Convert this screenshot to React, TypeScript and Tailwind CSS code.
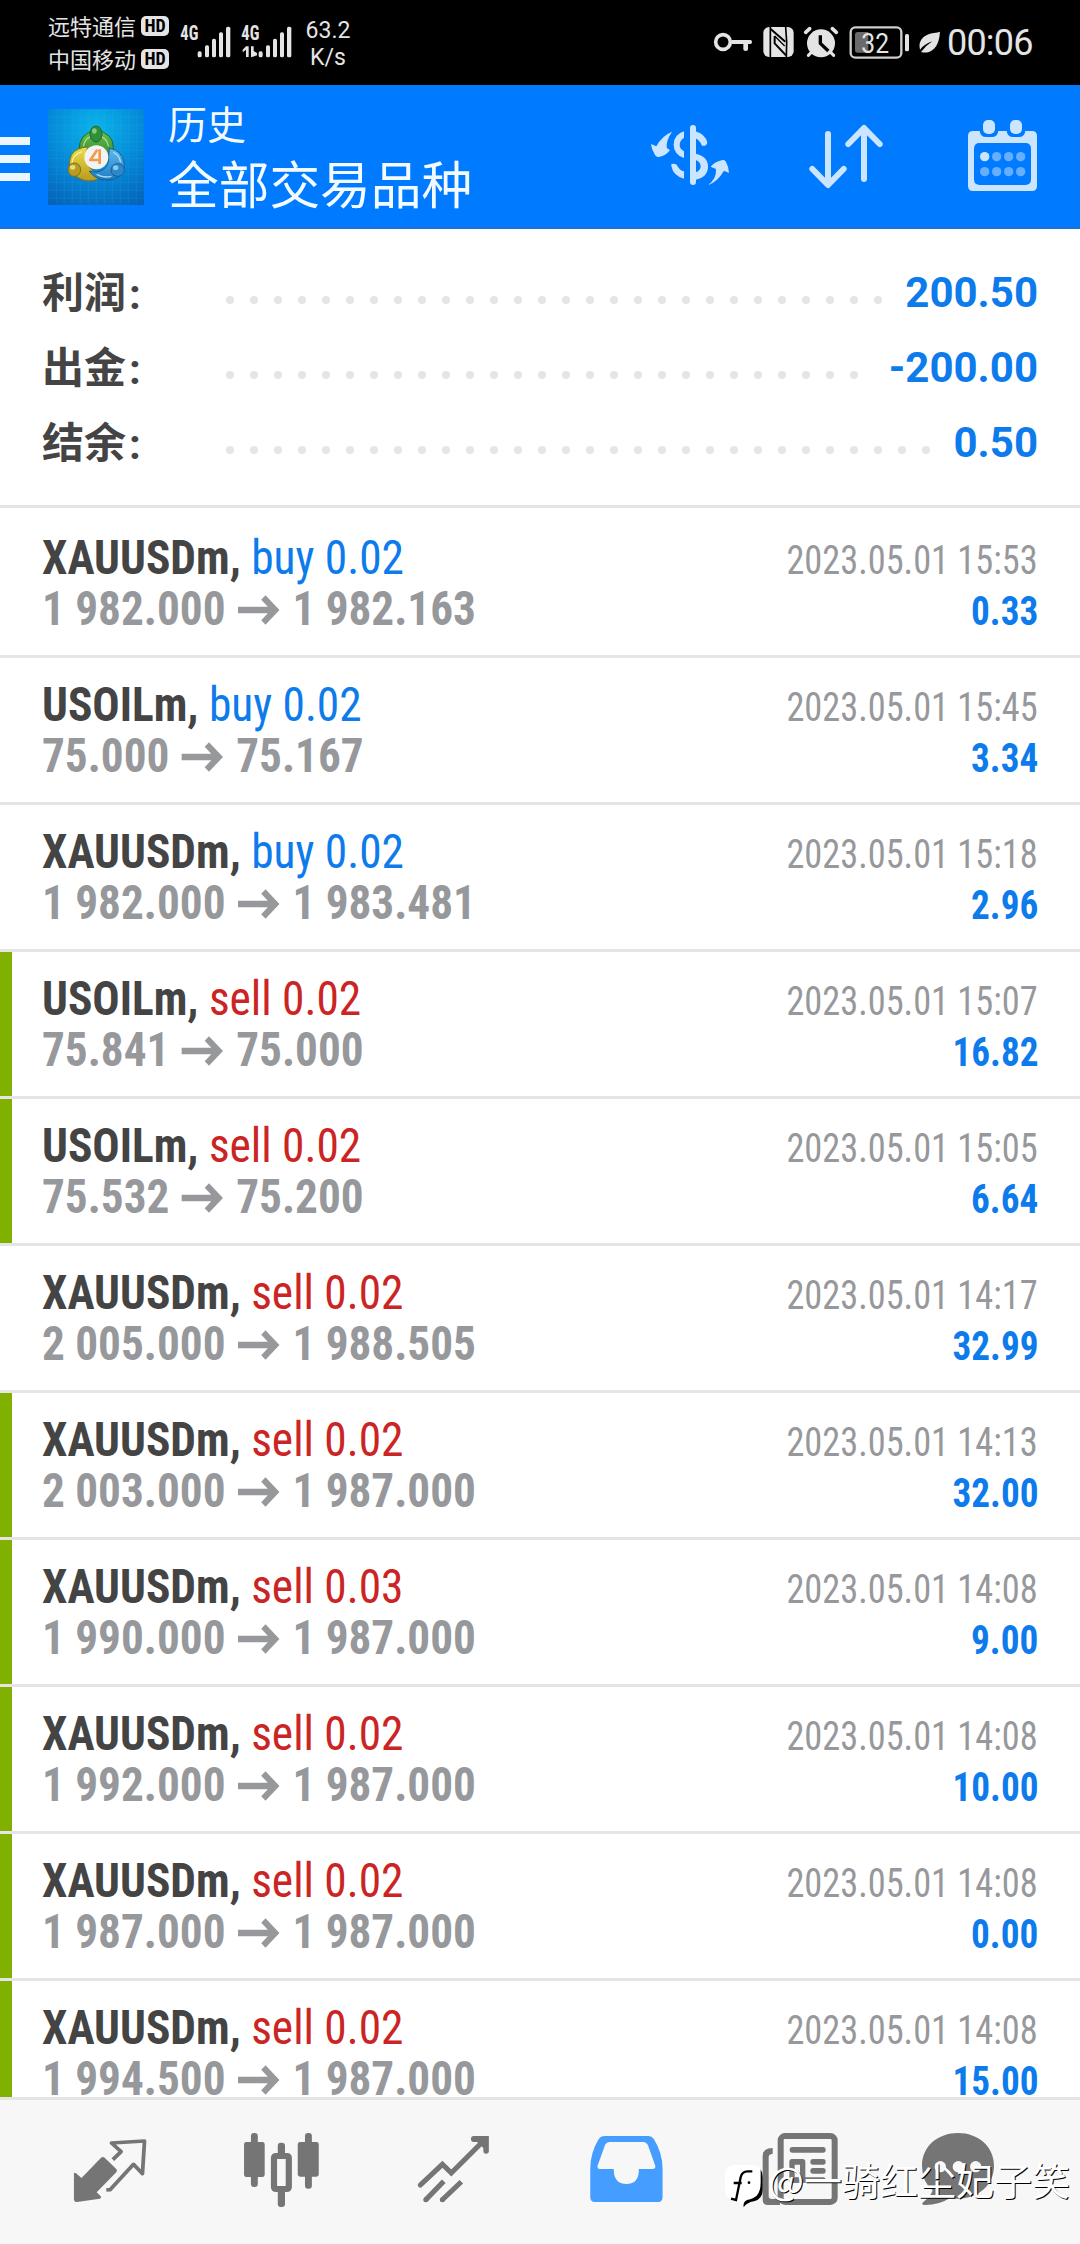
import type { ReactNode } from "react";

type Side = "buy" | "sell";

interface Deal {
  symbol: string;
  side: Side;
  volume: string;
  open: string;
  close: string;
  time: string;
  profit: string;
  // closed by take profit, drawn with a green mark on the left edge
  tp?: boolean;
}

const deals: Deal[] = [
  { symbol: "XAUUSDm", side: "buy", volume: "0.02", open: "1 982.000", close: "1 982.163", time: "2023.05.01 15:53", profit: "0.33" },
  { symbol: "USOILm", side: "buy", volume: "0.02", open: "75.000", close: "75.167", time: "2023.05.01 15:45", profit: "3.34" },
  { symbol: "XAUUSDm", side: "buy", volume: "0.02", open: "1 982.000", close: "1 983.481", time: "2023.05.01 15:18", profit: "2.96" },
  { symbol: "USOILm", side: "sell", volume: "0.02", open: "75.841", close: "75.000", time: "2023.05.01 15:07", profit: "16.82", tp: true },
  { symbol: "USOILm", side: "sell", volume: "0.02", open: "75.532", close: "75.200", time: "2023.05.01 15:05", profit: "6.64", tp: true },
  { symbol: "XAUUSDm", side: "sell", volume: "0.02", open: "2 005.000", close: "1 988.505", time: "2023.05.01 14:17", profit: "32.99" },
  { symbol: "XAUUSDm", side: "sell", volume: "0.02", open: "2 003.000", close: "1 987.000", time: "2023.05.01 14:13", profit: "32.00", tp: true },
  { symbol: "XAUUSDm", side: "sell", volume: "0.03", open: "1 990.000", close: "1 987.000", time: "2023.05.01 14:08", profit: "9.00", tp: true },
  { symbol: "XAUUSDm", side: "sell", volume: "0.02", open: "1 992.000", close: "1 987.000", time: "2023.05.01 14:08", profit: "10.00", tp: true },
  { symbol: "XAUUSDm", side: "sell", volume: "0.02", open: "1 987.000", close: "1 987.000", time: "2023.05.01 14:08", profit: "0.00", tp: true },
  { symbol: "XAUUSDm", side: "sell", volume: "0.02", open: "1 994.500", close: "1 987.000", time: "2023.05.01 14:08", profit: "15.00", tp: true },
];

const summary = [
  { label: "利润", value: "200.50", dots: 28 },
  { label: "出金", value: "-200.00", dots: 27 },
  { label: "结余", value: "0.50", dots: 30 },
];

function Carrier({ name }: { name: string }) {
  return (
    <div className="flex items-center h-[33px]">
      <span className="w-[93px] text-[22px] leading-[33px] whitespace-nowrap">{name}</span>
      <span className="flex items-center justify-center w-[28px] h-5 rounded-[5px] bg-[#e4e4e4] text-black text-[18px] leading-5 font-bold font-['Roboto_Condensed',Roboto,sans-serif] font-stretch-condensed">
        HD
      </span>
    </div>
  );
}

function Signal({ data }: { data?: boolean }) {
  return (
    <div className="flex w-[61px]">
      <svg className="w-[51px] h-[33px]" viewBox="450 75 153 99" fill="#e4e4e4">
        <text
          x="451"
          y="121"
          fontSize="58"
          fontWeight="700"
          textLength="54"
          lengthAdjust="spacingAndGlyphs"
          fontFamily="'Roboto Condensed', Roboto, sans-serif"
        >
          4G
        </text>
        {data && <path d="M465 139h8v32h-8v-22l-10 8v-8zM480 139h8v14l10 6v7l-18 6z" />}
        <rect x="503" y="154" width="12" height="18" rx="5" />
        <rect x="525" y="136" width="12" height="36" rx="5" />
        <rect x="546" y="116" width="12" height="56" rx="5" />
        <rect x="567" y="97" width="12" height="75" rx="5" />
        <rect x="588" y="80" width="13" height="92" rx="5" />
      </svg>
    </div>
  );
}

function StatusBar() {
  return (
    <div className="flex h-[85px] shrink-0 bg-black text-[#e4e4e4] font-['Noto_Sans_CJK_SC',sans-serif]">
      <div className="flex flex-col pl-12 pt-[9px] w-[180px] shrink-0">
        <Carrier name="远特通信" />
        <Carrier name="中国移动" />
      </div>
      <div className="flex pt-[25px]">
        <Signal />
        <Signal data />
      </div>
      <div className="pt-[17px] pl-0.5 w-[50px] text-center text-[23px] leading-[27px] font-[Roboto,sans-serif]">
        <div>63.2</div>
        <div>K/s</div>
      </div>
      <div className="flex grow justify-end pr-[45px] pt-[15px] font-[Roboto,sans-serif]">
        <svg className="w-[236px] h-[54px]" viewBox="210 45 708 162" fill="#e4e4e4">
          {/* vpn key */}
          <circle cx="249" cy="126" r="22" fill="none" stroke="#e4e4e4" strokeWidth="11" />
          <path d="M275 120h56q5 0 5 6t-5 6h-7v16q0 5-7 5t-7-5v-16h-35z" />
          {/* nfc */}
          <rect x="370" y="81" width="91" height="90" rx="17" />
          <path d="M391 81v90M437 81q5 44 2 90" fill="none" stroke="#000" strokeWidth="5" />
          <path d="M392 87l44 38M404 108v22l34 36" fill="none" stroke="#000" strokeWidth="6" />
          <path d="M404 108l30 30" stroke="#000" strokeWidth="4" />
          {/* alarm */}
          <circle cx="543" cy="130" r="42" />
          <path d="M497 97l12-11M589 97l-12-11" stroke="#e4e4e4" strokeWidth="11" strokeLinecap="round" />
          <path d="M514 157l-9 9M572 157l9 9" stroke="#e4e4e4" strokeWidth="9" strokeLinecap="round" />
          <path d="M541 106v24l24 23" fill="none" stroke="#000" strokeWidth="10" />
          {/* battery */}
          <rect x="632" y="82" width="152" height="91" rx="14" fill="none" stroke="#cfcfcf" strokeWidth="7" />
          <path d="M653 96h32v62h-32q-8 0-8-8v-46q0-8 8-8z" fill="#6a6a6a" />
          <rect x="795" y="102" width="12" height="52" rx="5" />
          <text x="664" y="158" fontSize="84" textLength="83" lengthAdjust="spacingAndGlyphs" fontFamily="Roboto, sans-serif">
            32
          </text>
          {/* power saving leaf */}
          <path d="M900 95q-2 36-18 51-16 15-36 11l-3-1q14-19 34-32-24 8-37 25-6-22 10-37 12-11 32-13 12-1 18-4z" />
        </svg>
        <span className="pl-px w-[89px] text-[36px] leading-[57px] tracking-[-0.8px] whitespace-nowrap">00:06</span>
      </div>
    </div>
  );
}

function AppLogo() {
  return (
    <svg className="w-24 h-24 mt-0.5" viewBox="54 326 288 288">
      <defs>
        <radialGradient id="bg" cx="0.5" cy="0.2" r="0.9">
          <stop offset="0" stopColor="#0ab4ea" />
          <stop offset="0.55" stopColor="#0588d8" />
          <stop offset="1" stopColor="#0564b8" />
        </radialGradient>
        <linearGradient id="green" x1="0" y1="0" x2="0" y2="1">
          <stop offset="0" stopColor="#6cc04f" />
          <stop offset="1" stopColor="#25802c" />
        </linearGradient>
        <linearGradient id="yellow" x1="0" y1="0" x2="0" y2="1">
          <stop offset="0" stopColor="#eadf4a" />
          <stop offset="1" stopColor="#b99b1c" />
        </linearGradient>
        <linearGradient id="blue" x1="0" y1="0" x2="0" y2="1">
          <stop offset="0" stopColor="#5fb9ec" />
          <stop offset="1" stopColor="#1f7cc4" />
        </linearGradient>
      </defs>
      <rect x="54" y="326" width="288" height="288" fill="url(#bg)" />
      <path
        d="M79 326v288M103 326v288M127 326v288M151 326v288M175 326v288M199 326v288M223 326v288M247 326v288M271 326v288M295 326v288M319 326v288M54 350h288M54 375h288M54 400h288M54 425h288M54 450h288M54 475h288M54 500h288M54 523h288M54 546h288M54 570h288M54 594h288"
        stroke="#5cc4f4"
        strokeWidth="1"
        opacity="0.3"
      />
      {/* three linked figures round the badge */}
      <path d="M148 452q-5-52 50-62 52 8 52 52 0 24-14 42h-70q-16-12-18-32z" fill="url(#green)" stroke="#1f6a2a" strokeWidth="3" />
      <path d="M160 438q4-30 38-34 32 4 38 34" fill="none" stroke="#a4d98a" strokeWidth="4" />
      <path d="M118 500q-2-44 28-54 12-6 28-6-12 24-4 46 8 20 30 34l12 12q-24 14-50 8-36-12-44-40z" fill="url(#yellow)" stroke="#80701a" strokeWidth="3" />
      <path d="M126 490q0-26 30-36" fill="none" stroke="#f7f2a2" strokeWidth="4" />
      <path d="M178 512q26 8 44-6 16-14 14-40l2-22q36 4 44 42 4 20-6 34-22 24-60 18-26-6-38-26z" fill="url(#blue)" stroke="#1a5d96" strokeWidth="3" />
      <path d="M250 456q18 8 22 30M200 522q22 12 44 6" fill="none" stroke="#a9dcf8" strokeWidth="4" />
      <ellipse cx="198" cy="401" rx="18" ry="24" fill="#2f8f3a" stroke="#1f6a2a" strokeWidth="3" />
      <ellipse cx="193" cy="392" rx="7" ry="8" fill="#85cc78" />
      <ellipse cx="133" cy="508" rx="19" ry="20" fill="#b89b22" stroke="#80701a" strokeWidth="3" />
      <ellipse cx="128" cy="501" rx="8" ry="7" fill="#eadd78" />
      <ellipse cx="263" cy="509" rx="20" ry="19" fill="#2c8acb" stroke="#1a5d96" strokeWidth="3" />
      <ellipse cx="257" cy="502" rx="8" ry="7" fill="#8cc9f0" />
      <circle cx="199" cy="471" r="36" fill="#f3f3f5" />
      <path d="M202 448l-21 31h31M209 447v44" fill="none" stroke="#f39a4a" strokeWidth="8" strokeLinejoin="round" />
    </svg>
  );
}

function Header() {
  return (
    <header className="flex items-center h-36 shrink-0 bg-[#007aff] border-b-2 border-[#1a72d4] text-[#f3fbff]">
      <div className="flex flex-col gap-[10px] w-[30px] mr-[18px] mt-1.5">
        <div className="h-2 bg-[#ebf6ff]" />
        <div className="h-2 bg-[#ebf6ff]" />
        <div className="h-2 bg-[#ebf6ff]" />
      </div>
      <AppLogo />
      <div className="grow pl-6 -mt-1.5 font-['Noto_Sans_CJK_SC',sans-serif]">
        <div className="text-[39px] leading-[58px]">历史</div>
        <div className="text-[50.7px] leading-[62px]">全部交易品种</div>
      </div>
      {/* currency switch */}
      <svg className="w-[156px] h-36 mt-0.5" viewBox="-84 255 468 432" fill="#cce5ff">
        <path d="M96 395q-20 30-15 50l9 5q-12 17-33 21-8 1-12-6-11-17-12-33l16 7q17-32 47-44z" />
        <path d="M204 555q26-18 24-48l-16-7q14-16 36-20 7-1 10 6 9 16 9 33l-15-7q-20 34-48 43z" />
        <rect x="150" y="375" width="18" height="180" rx="9" />
        <path d="M132 394v19q-13 8-13 22 0 12 13 19v20q-31-11-31-40 0-30 31-40z" />
        <path d="M94 492q9-3 16 2 8 17 22 20v22q-32-8-38-38z" />
        <path d="M166 394q30 8 36 34-4 12-16 9-8-18-20-22zM166 461q38 8 38 38 0 34-38 40v-22q16-4 16-18 0-13-16-20z" />
      </svg>
      {/* sort */}
      <svg className="w-[156px] h-36 mt-0.5" viewBox="384 255 468 432" fill="none" stroke="#cce5ff" strokeWidth="18" strokeLinecap="round" strokeLinejoin="round">
        <path d="M564 402v151M517 507l47 48 47-48" />
        <path d="M672 537V386M625 432l47-48 47 48" />
      </svg>
      {/* calendar */}
      <svg className="w-[156px] h-36 mt-0.5" viewBox="852 255 468 432" fill="#cce5ff">
        <path
          fillRule="evenodd"
          d="M999 393h20q3 18 19 18h18q16 0 19-18h25q3 18 19 18h18q16 0 19-18h20q15 0 15 15v150q0 15-15 15H999q-15 0-15-15V408q0-15 15-15zM1019 429q-17 0-17 17v92q0 17 17 17h137q17 0 17-17v-92q0-17-17-17z"
        />
        <rect x="1029" y="360" width="36" height="42" rx="15" />
        <rect x="1110" y="360" width="36" height="42" rx="15" />
        <circle cx="1034" cy="470" r="14" />
        <g fill="#66afff">
          <circle cx="1070" cy="470" r="14" />
          <circle cx="1106" cy="470" r="14" />
          <circle cx="1142" cy="470" r="14" />
          <circle cx="1034" cy="515" r="14" />
          <circle cx="1070" cy="515" r="14" />
          <circle cx="1106" cy="515" r="14" />
          <circle cx="1142" cy="515" r="14" />
        </g>
      </svg>
    </header>
  );
}

function SummaryRow({ label, value, dots }: { label: string; value: string; dots: number }) {
  return (
    <div className="flex h-[75px] text-[42px] leading-[75px] font-bold">
      <div className="flex w-[184px] text-[#444444]">
        <span className="-mt-[3px] font-['Noto_Sans_CJK_SC',sans-serif]">{label}</span>
        <span className="mt-0.5 pl-[3px] font-[Roboto,sans-serif]">:</span>
      </div>
      <div className="flex items-center gap-4 pt-[15px]">
        {Array.from({ length: dots }, (_, i) => (
          <span key={i} className="size-2 rounded-full bg-[#e5e5e5]" />
        ))}
      </div>
      <span className="ml-auto text-[#0d7bec] font-[Roboto,sans-serif]">{value}</span>
    </div>
  );
}

function Arrow() {
  return (
    <svg className="w-[45px] h-[30px] mx-[13px]" viewBox="0 0 45 30" fill="none" stroke="#96989b" strokeWidth="6.500">
      <path d="M0 15h40M27 2.500L39.500 15 27 27.500" />
    </svg>
  );
}

function DealRow({ deal }: { deal: Deal }) {
  return (
    <div className="flex h-[147px] shrink-0 border-b-3 border-[#e5e5e5]">
      <div className={`w-3 shrink-0 ${deal.tp ? "bg-[#80b000]" : ""}`} />
      <div className="grow pl-[30px] pr-[42px] pt-[21px] font-['Roboto_Condensed',Roboto,sans-serif] font-stretch-condensed">
        <div className="flex items-baseline justify-between h-[51px] leading-[51px]">
          <div className="text-[48px] origin-left scale-x-[0.945]">
            <span className="font-bold text-[#444444]">{deal.symbol}, </span>
            <span className={deal.side === "buy" ? "text-[#0d7bec]" : "text-[#cb2424]"}>
              {deal.side} {deal.volume}
            </span>
          </div>
          <div className="text-[40px] text-[#96989b] origin-right scale-x-[0.908]">{deal.time}</div>
        </div>
        <div className="flex items-baseline justify-between h-[51px] leading-[51px] font-bold">
          <div className="flex items-baseline text-[48px] text-[#96989b] origin-left scale-x-[0.942]">
            {deal.open}
            <Arrow />
            {deal.close}
          </div>
          <div className="text-[40px] text-[#0d7bec] origin-right scale-x-[0.93]">{deal.profit}</div>
        </div>
      </div>
    </div>
  );
}

function Tab({ viewBox, color, children }: { viewBox: string; color: string; children: ReactNode }) {
  return (
    <svg className="w-[172px] h-36" viewBox={viewBox} preserveAspectRatio="none" fill={color}>
      {children}
    </svg>
  );
}

function TabBar() {
  return (
    <nav className="relative flex h-[147px] pl-6 shrink-0 bg-[#f7f7f7] border-t-3 border-[#e5e5e5]">
      {/* quotes */}
      <Tab viewBox="70 60 499.5 432" color="#757575">
        <path d="M215 280q2-4 6 0l16 14 56-60q6-6 12 0l33 33q4 5 0 10l-57 60 12 12q3 5-3 7l-66 10q-9 0-9-10z" />
        <path d="M328 239l24-24-28-26 96-6-6 98-26-28-68 76-11 1" fill="none" stroke="#757575" strokeWidth="11" strokeLinejoin="round" />
      </Tab>
      {/* charts */}
      <Tab viewBox="569.5 60 499.5 432" color="#757575">
        <rect x="729" y="159" width="20" height="162" rx="9" />
        <rect x="709" y="186" width="60" height="105" rx="7" />
        <rect x="886" y="159" width="20" height="167" rx="9" />
        <rect x="865" y="186" width="61" height="104" rx="7" />
        <rect x="807" y="188" width="21" height="50" rx="9" />
        <rect x="807" y="320" width="21" height="61" rx="9" />
        <rect x="796" y="228" width="43" height="99" rx="5" fill="#f7f7f7" stroke="#757575" strokeWidth="18" />
      </Tab>
      {/* trade */}
      <Tab viewBox="1069 60 499.5 432" color="#757575">
        <g fill="none" stroke="#757575" strokeWidth="15">
          <path d="M1221 315l64-62 26 26 88-91" strokeLinecap="round" />
          <path d="M1237 359l52-55M1285 359l55-54" />
          <path d="M1237 359h0M1285 359h0" strokeLinecap="round" />
        </g>
        <path d="M1376 168h44v45q0 8-8 8t-8-8v-9l-18-18h-10q-8 0-8-9t8-9z" />
      </Tab>
      {/* history, active */}
      <Tab viewBox="0 60 499.5 432" color="#459dff">
        <path
          fillRule="evenodd"
          d="M186 168h129q10 0 15 8 26 42 26 90v85q0 15-13 15H159q-13 0-13-15v-85q0-48 25-90 5-8 15-8zM202 186q-9 0-13 8l-22 64q-1 9 7 9h40q0 45 37 45t36-45h40q9 0 8-9l-22-64q-5-8-13-8z"
        />
      </Tab>
      {/* news */}
      <Tab viewBox="36 -60 516 432" color="#757575">
        <rect x="242" y="48" width="162" height="198" rx="13" fill="none" stroke="#757575" strokeWidth="18" />
        <path d="M218 84v18q-12 0-12 10v116q0 9 10 9h24v18h-36q-16 0-16-16V108q0-24 30-24z" />
        <rect x="269" y="81" width="108" height="17" rx="8" />
        <path fillRule="evenodd" d="M276 117h32q8 0 8 8v55q0 8-8 8h-32q-8 0-8-8v-55q0-8 8-8zM284 134v38h16v-38z" />
        <rect x="331" y="117" width="46" height="17" rx="8" />
        <rect x="331" y="144" width="46" height="17" rx="8" />
        <rect x="269" y="172" width="108" height="16" rx="8" />
      </Tab>
      {/* chat */}
      <Tab viewBox="552 -60 516 432" color="#757575">
        <path d="M774 39c60 0 108 40 108 98s-48 99-108 99q-14 0-24-2-34 22-78 21-10-3-1-10 22-16 27-34-32-26-32-74c0-58 48-98 108-98z" />
        <g fill="#f7f7f7">
          <circle cx="721" cy="140" r="17" />
          <circle cx="775" cy="140" r="17" />
          <circle cx="827" cy="140" r="17" />
        </g>
      </Tab>

      {/* watermark */}
      <div className="absolute left-[723px] top-[62px] flex items-center text-white whitespace-nowrap">
        <svg className="w-[42px] h-[48px]" viewBox="70 128 126 144">
          <path d="M103 137h55q29 0 29 30v43q0 28-22 35-22 4-32 17-12-16-30-20-27-4-27-34v-41q0-30 27-30z" fill="#fff" />
          <path d="M158 156h-14q-17 0-21 18l-14 68-15-4M102 191h24" fill="none" stroke="#000" strokeWidth="7" />
          <path d="M183 150q6 10 6 24v38q0 27-26 34-22 4-31 18-3-16 10-22 20-5 29-13 12-12 12-40z" />
          <circle cx="148" cy="190" r="4" />
        </svg>
        <span className="pl-[3px] -mt-3.5 text-[38px] leading-[38px] font-['Noto_Sans_CJK_SC',sans-serif] [text-shadow:1px_1px_0_#000]">
          @一骑红尘妃子笑
        </span>
      </div>
    </nav>
  );
}

export default function App() {
  return (
    <div className="flex flex-col w-[1080px] h-[2244px] overflow-hidden bg-white">
      <StatusBar />
      <Header />
      <section className="h-[279px] shrink-0 pl-[42px] pr-[42px] pt-[26px] border-b-3 border-[#e5e5e5]">
        {summary.map((row) => (
          <SummaryRow key={row.label} {...row} />
        ))}
      </section>
      <main className="flex flex-col flex-1 min-h-0 overflow-hidden pt-[3px]">
        {deals.map((deal, i) => (
          <DealRow key={i} deal={deal} />
        ))}
      </main>
      <TabBar />
    </div>
  );
}
